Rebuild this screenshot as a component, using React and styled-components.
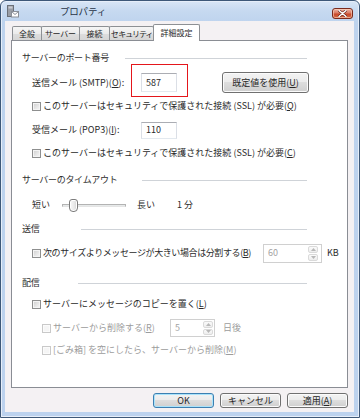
import React from "react";
import styled, { createGlobalStyle } from "styled-components";

const FONT = `"Noto Sans CJK JP", "Noto Sans", "Liberation Sans", sans-serif`;

const Global = createGlobalStyle`
  html, body { margin: 0; padding: 0; background: #ffffff; }
  body {
    width: 360px; height: 418px; overflow: hidden;
    font-family: ${FONT}; font-size: 9px; line-height: 12px; color: #2a2a2a;
  }
  * { box-sizing: border-box; }
  u { text-decoration-thickness: 1px; text-underline-offset: 1px; }
`;

const Window = styled.div`
  width: 360px;
  height: 418px;
  display: flex;
  flex-direction: column;
  border: 1px solid #3e5878;
  border-radius: 6px 6px 0 0;
  background: linear-gradient(180deg, #d9e6f6 0px, #c6d9f0 10px, #bed3ee 22px, #bcd2ee 100%);
  box-shadow: inset 0 0 0 1px #e6eef9;
`;

const TitleBar = styled.div`
  height: 20px;
  flex: none;
  display: flex;
  align-items: center;
  padding: 0 6px;
`;

const TitleText = styled.span`
  margin-left: 41px;
  font-size: 9.5px;
  color: #283446;
  letter-spacing: -0.2px;
`;

const CloseButton = styled.div`
  margin-left: auto;
  margin-top: 4px;
  width: 21px;
  height: 11px;
  border: 1px solid #7b2a1c;
  border-radius: 3px;
  display: flex;
  align-items: center;
  justify-content: center;
  background: linear-gradient(180deg, #eeb0a0 0%, #d97a62 45%, #c8472a 55%, #d46a45 100%);
  box-shadow: inset 0 0 0 1px rgba(255, 220, 200, 0.55);
`;

const Body = styled.div`
  flex: 1;
  margin: 0 5px 5px 4px;
  background: #f4f1f3;
  padding: 3px 6px 4px 6px;
  display: flex;
  flex-direction: column;
`;

const TabStrip = styled.div`
  height: 16px;
  flex: none;
  display: flex;
  align-items: flex-end;
  padding-left: 1px;
  position: relative;
  z-index: 1;
`;

const Tab = styled.div`
  width: ${(p) => p.$w}px;
  height: ${(p) => (p.$active ? 17 : 14)}px;
  margin-left: ${(p) => (p.$first ? 0 : -1)}px;
  margin-bottom: ${(p) => (p.$active ? -1 : 0)}px;
  border: 1px solid #8d9094;
  border-bottom: none;
  border-radius: 2px 2px 0 0;
  background: ${(p) =>
    p.$active ? "#ffffff" : "linear-gradient(180deg, #f6f6f6 0%, #ebebeb 50%, #dddddd 51%, #d6d6d6 100%)"};
  display: flex;
  align-items: center;
  justify-content: center;
  font-size: 8px;
  font-feature-settings: "palt" 1;
  color: #262626;
  white-space: nowrap;
  position: relative;
  z-index: ${(p) => (p.$active ? 2 : 1)};
`;

const Panel = styled.div`
  height: 348px;
  flex: none;
  border: 1px solid #8a8d94;
  background: #ffffff;
  padding: 11px 40px 0 10px;
  display: flex;
  flex-direction: column;
`;

const Header = styled.div`
  display: grid;
  grid-template-columns: ${(p) => p.$line}px 1fr;
  align-items: center;
  height: 12px;
  margin-top: ${(p) => p.$mt || 0}px;
  white-space: nowrap;
  color: #2f2f2f;
  letter-spacing: -0.3px;
`;

const HeaderLine = styled.div`
  height: 1px;
  background: #cfd3d8;
`;

const Row = styled.div`
  display: flex;
  align-items: center;
  height: ${(p) => p.$h || 12}px;
  margin-top: ${(p) => p.$mt || 0}px;
  padding-left: ${(p) => p.$indent || 10}px;
  white-space: nowrap;
`;

const Cell = styled.div`
  width: ${(p) => p.$w}px;
  flex: none;
  display: flex;
  align-items: center;
  margin-left: ${(p) => p.$ml || 0}px;
  color: ${(p) => (p.$disabled ? "#9c9c9c" : "#2a2a2a")};
`;

const Text = styled.span`
  color: ${(p) => (p.$disabled ? "#9c9c9c" : "#2a2a2a")};
  margin-left: ${(p) => p.$ml || 0}px;
  letter-spacing: ${(p) => p.$ls || 0}px;
`;

const Check = styled.span`
  width: 9px;
  height: 9px;
  flex: none;
  margin-right: 2px;
  border: 1px solid ${(p) => (p.$disabled ? "#c9c9c9" : "#8e8f8f")};
  background: ${(p) =>
    p.$disabled ? "#f5f5f5" : "linear-gradient(135deg, #cdcdcd 0%, #e8e8e8 60%, #f7f7f7 100%)"};
  box-shadow: inset 0 0 0 1px ${(p) => (p.$disabled ? "#fbfbfb" : "#f4f4f4")};
`;

const FieldWrap = styled.div`
  position: relative;
  flex: none;
`;

const TextBox = styled.div`
  width: 36px;
  height: ${(p) => p.$h || 19}px;
  border: 1px solid #abadb3;
  border-left-color: #dbdfe6;
  border-right-color: #dbdfe6;
  border-bottom-color: #e3e9ef;
  background: #ffffff;
  padding-left: 4px;
  display: flex;
  align-items: center;
  color: #2a2a2a;
`;

const RedMark = styled.div`
  position: absolute;
  left: -10px;
  top: -9px;
  width: 57px;
  height: 33px;
  border: 1px solid #e4161b;
  pointer-events: none;
`;

const PushButton = styled.button`
  width: ${(p) => p.$w}px;
  height: ${(p) => p.$h}px;
  margin-left: ${(p) => p.$ml || 0}px;
  flex: none;
  padding: 0;
  border: 1px solid ${(p) => (p.$default ? "#3c7fb1" : "#707070")};
  border-radius: 3px;
  background: linear-gradient(180deg, #f3f3f3 0%, #ebebeb 49%, #dddddd 50%, #cfcfcf 100%);
  box-shadow: inset 0 0 0 1px ${(p) => (p.$default ? "#a9e3fb" : "#fbfbfb")};
  font-family: ${FONT};
  font-size: 9px;
  line-height: 12px;
  color: #262626;
  display: flex;
  align-items: center;
  justify-content: center;
  white-space: nowrap;
`;

const SliderTrack = styled.div`
  position: relative;
  width: 64px;
  height: 3px;
  flex: none;
  border: 1px solid #b3b3b3;
  border-bottom-color: #e4e4e4;
  background: #e7eaea;
`;

const SliderThumb = styled.div`
  position: absolute;
  left: 6px;
  top: -6px;
  width: 9px;
  height: 13px;
  border: 1px solid #7c7c7c;
  border-radius: 3px 3px 4px 4px;
  background: linear-gradient(90deg, #f8f8f8 0%, #e9e9e9 60%, #d2d2d2 100%);
  box-shadow: inset 0 0 0 1px #ffffff;
`;

const Spinner = styled.div`
  width: ${(p) => p.$w}px;
  height: ${(p) => p.$h}px;
  flex: none;
  border: 1px solid #d0d0d0;
  background: #ffffff;
  display: flex;
  align-items: stretch;
  padding: 1px ${(p) => p.$pad}px 1px 0;
`;

const SpinValue = styled.div`
  flex: 1;
  padding-left: 4px;
  display: flex;
  align-items: center;
  color: #a3a3a3;
`;

const SpinButtons = styled.div`
  width: 10px;
  display: flex;
  flex-direction: column;
  gap: 1px;
`;

const SpinBtn = styled.div`
  flex: 1;
  border: 1px solid #dadada;
  border-radius: 2px;
  background: linear-gradient(180deg, #fafafa, #eeeeee);
  display: flex;
  align-items: center;
  justify-content: center;
`;

const ButtonBar = styled.div`
  margin-top: 5px;
  height: 15px;
  flex: none;
  display: flex;
  justify-content: flex-end;
  gap: 6px;
`;

const Arrow = ({ up }) => (
  <svg width="5" height="3" viewBox="0 0 5 3">
    <polygon points={up ? "2.5,0 5,3 0,3" : "0,0 5,0 2.5,3"} fill="#b8b8b8" />
  </svg>
);

const SpinBox = ({ w, h, pad, value }) => (
  <Spinner $w={w} $h={h} $pad={pad}>
    <SpinValue>{value}</SpinValue>
    <SpinButtons>
      <SpinBtn>
        <Arrow up />
      </SpinBtn>
      <SpinBtn>
        <Arrow />
      </SpinBtn>
    </SpinButtons>
  </Spinner>
);

const AppIcon = () => (
  <svg width="12" height="13" viewBox="0 0 12 13">
    <rect x="0.5" y="0.5" width="6" height="11" fill="#9a9ea6" stroke="#6b7078" />
    <rect x="1.5" y="1.5" width="4" height="2" fill="#c9ccd1" />
    <rect x="4.5" y="6.5" width="7" height="5.5" fill="#ffffff" stroke="#8a8f98" />
    <polyline points="4.5,6.5 8,9.5 11.5,6.5" fill="none" stroke="#8a8f98" />
  </svg>
);

const CloseX = () => (
  <svg width="9" height="7" viewBox="0 0 9 7">
    <path d="M1 0.5 L8 6.5 M8 0.5 L1 6.5" stroke="#5b1a10" strokeWidth="2.6" strokeLinecap="round" />
    <path d="M1 0.5 L8 6.5 M8 0.5 L1 6.5" stroke="#ffffff" strokeWidth="1.5" strokeLinecap="round" />
  </svg>
);

export default function App() {
  return (
    <>
      <Global />
      <Window>
        <TitleBar>
          <AppIcon />
          <TitleText>プロパティ</TitleText>
          <CloseButton>
            <CloseX />
          </CloseButton>
        </TitleBar>
        <Body>
          <TabStrip>
            <Tab $w={30} $first>全般</Tab>
            <Tab $w={39}>サーバー</Tab>
            <Tab $w={31}>接続</Tab>
            <Tab $w={45}>セキュリティ</Tab>
            <Tab $w={47} $active>詳細設定</Tab>
          </TabStrip>
          <Panel>
            <Header $line={103}>
              <span>サーバーのポート番号</span>
              <HeaderLine />
            </Header>
            <Row $h={21} $mt={8}>
              <Cell $w={109}>
                送信メール (SMTP)(<u>O</u>):
              </Cell>
              <FieldWrap>
                <TextBox $h={19}>587</TextBox>
                <RedMark />
              </FieldWrap>
              <PushButton $w={87} $h={21} $ml={45}>
                既定値を使用(<u>U</u>)
              </PushButton>
            </Row>
            <Row $mt={7}>
              <Check />
              <Text>
                このサーバーはセキュリティで保護された接続 (SSL) が必要(<u>Q</u>)
              </Text>
            </Row>
            <Row $h={18} $mt={9}>
              <Cell $w={109}>
                受信メール (POP3)(<u>I</u>):
              </Cell>
              <FieldWrap>
                <TextBox $h={17}>110</TextBox>
              </FieldWrap>
            </Row>
            <Row $mt={8}>
              <Check />
              <Text>
                このサーバーはセキュリティで保護された接続 (SSL) が必要(<u>C</u>)
              </Text>
            </Row>

            <Header $line={120} $mt={15}>
              <span>サーバーのタイムアウト</span>
              <HeaderLine />
            </Header>
            <Row $h={16} $mt={11}>
              <Cell $w={30}>短い</Cell>
              <SliderTrack>
                <SliderThumb />
              </SliderTrack>
              <Cell $w={40} $ml={11}>
                長い
              </Cell>
              <Text>1 分</Text>
            </Row>

            <Header $line={59} $mt={10}>
              <span>送信</span>
              <HeaderLine />
            </Header>
            <Row $h={20} $mt={8}>
              <Cell $w={231}>
                <Check />
                <Text $ls={-0.4}>
                  次のサイズよりメッセージが大きい場合は分割する(<u>B</u>)
                </Text>
              </Cell>
              <SpinBox w={59} h={19} pad={3} value="60" />
              <Text $ml={5}>KB</Text>
            </Row>

            <Header $line={56} $mt={14}>
              <span>配信</span>
              <HeaderLine />
            </Header>
            <Row $mt={9}>
              <Check />
              <Text>
                サーバーにメッセージのコピーを置く(<u>L</u>)
              </Text>
            </Row>
            <Row $h={20} $mt={8} $indent={20}>
              <Cell $w={128} $disabled>
                <Check $disabled />
                <Text $disabled>
                  サーバーから削除する(<u>R</u>)
                </Text>
              </Cell>
              <SpinBox w={45} h={18} pad={1} value="5" />
              <Text $ml={8} $disabled>
                日後
              </Text>
            </Row>
            <Row $mt={6} $indent={20}>
              <Check $disabled />
              <Text $disabled>
                [ごみ箱] を空にしたら、サーバーから削除(<u>M</u>)
              </Text>
            </Row>
          </Panel>
          <ButtonBar>
            <PushButton $w={61} $h={15} $default>
              OK
            </PushButton>
            <PushButton $w={61} $h={15}>
              キャンセル
            </PushButton>
            <PushButton $w={61} $h={15}>
              適用(<u>A</u>)
            </PushButton>
          </ButtonBar>
        </Body>
      </Window>
    </>
  );
}
